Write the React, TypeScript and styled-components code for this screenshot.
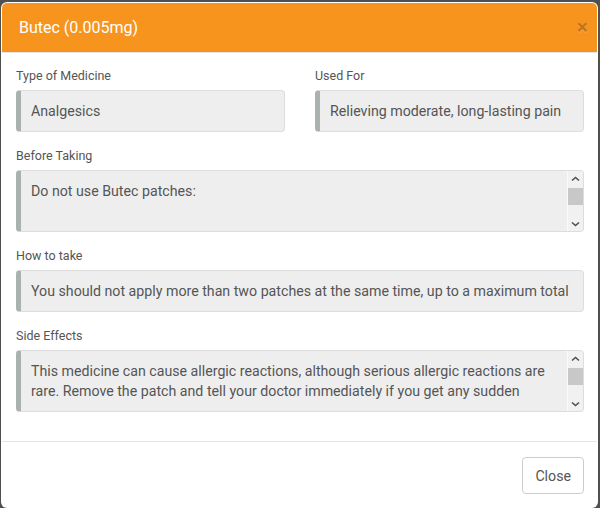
import React from 'react';
import styled, { createGlobalStyle } from 'styled-components';

const GlobalStyle = createGlobalStyle`
  html, body {
    margin: 0;
    padding: 0;
    background: #505050;
    font-family: Roboto, "Liberation Sans", Arial, sans-serif;
  }
  * { box-sizing: border-box; }
`;

const beforeTaking = `Do not use Butec patches:

- if you are allergic to buprenorphine or to any of the other ingredients of this medicine
- if you have serious breathing problems`;

const sideEffects = `This medicine can cause allergic reactions, although serious allergic reactions are rare. Remove the patch and tell your doctor immediately if you get any sudden wheeziness, difficulties in breathing, swelling of the eyelids, face or lips, rash or itching.`;

const Chevron: React.FC<{ down?: boolean }> = ({ down }) => (
  <svg width="9" height="6" viewBox="0 0 9 6">
    <path
      d={down ? 'M1 1.5 L4.5 4.5 L8 1.5' : 'M1 4.5 L4.5 1.5 L8 4.5'}
      fill="none"
      stroke="#505050"
      strokeWidth="1.6"
    />
  </svg>
);

const ScrollBar: React.FC = () => (
  <Scroll>
    <ArrowBox><Chevron /></ArrowBox>
    <Track><Thumb /></Track>
    <ArrowBox><Chevron down /></ArrowBox>
  </Scroll>
);

const App: React.FC = () => {
  return (
    <>
      <GlobalStyle />
      <Backdrop>
        <Modal>
          <Header>
            <Title>Butec (0.005mg)</Title>
            <CloseX type="button" aria-label="Close">×</CloseX>
          </Header>

          <Body>
            <Row>
              <FormGroup>
                <Label>Type of Medicine</Label>
                <Field>
                  <FieldText>Analgesics</FieldText>
                </Field>
              </FormGroup>
              <FormGroup>
                <Label>Used For</Label>
                <Field>
                  <FieldText>Relieving moderate, long-lasting pain</FieldText>
                </Field>
              </FormGroup>
            </Row>

            <FormGroup>
              <Label>Before Taking</Label>
              <Field $multi>
                <FieldText $multi>{beforeTaking}</FieldText>
                <ScrollBar />
              </Field>
            </FormGroup>

            <FormGroup>
              <Label>How to take</Label>
              <Field>
                <FieldText>
                  You should not apply more than two patches at the same time, up to a maximum total
                </FieldText>
              </Field>
            </FormGroup>

            <FormGroup>
              <Label>Side Effects</Label>
              <Field $multi>
                <FieldText $multi>{sideEffects}</FieldText>
                <ScrollBar />
              </Field>
            </FormGroup>
          </Body>

          <Footer>
            <Button type="button">Close</Button>
          </Footer>
        </Modal>
      </Backdrop>
    </>
  );
};

const Backdrop = styled.div`
  width: 600px;
  height: 508px;
  overflow: hidden;
  padding: 2px 0 0 1px;
`;

const Modal = styled.div`
  width: 597px;
  background: #fff;
  border: 1px solid rgba(255, 255, 255, 0.6);
  border-radius: 6px;
  overflow: hidden;
`;

const Header = styled.div`
  height: 50px;
  background: #f7941e;
  border-bottom: 1px solid #e5e5e5;
  display: flex;
  align-items: center;
  justify-content: space-between;
  padding: 0 9px 0 17px;
`;

const Title = styled.h4`
  margin: 0;
  color: #fff;
  font-size: 16px;
  font-weight: 400;
`;

const CloseX = styled.button`
  background: none;
  border: none;
  padding: 0;
  font-family: inherit;
  font-size: 21px;
  font-weight: 700;
  line-height: 1;
  color: #000;
  opacity: 0.2;
  text-shadow: 0 1px 0 #fff;
  cursor: pointer;
`;

const Body = styled.div`
  padding: 14px 13px 14px 14px;
  display: flow-root;
`;

const Row = styled.div`
  display: grid;
  grid-template-columns: 1fr 1fr;
  column-gap: 30px;
`;

const FormGroup = styled.div`
  display: flex;
  flex-direction: column;
  margin-bottom: 15px;
`;

const Label = styled.label`
  font-size: 12.5px;
  line-height: 18px;
  color: #555;
  margin-bottom: 5px;
`;

const Field = styled.div<{ $multi?: boolean }>`
  display: flex;
  align-items: ${({ $multi }) => ($multi ? 'stretch' : 'center')};
  height: ${({ $multi }) => ($multi ? '62px' : '42px')};
  background: #eee;
  border: 1px solid #ddd;
  border-left: 5px solid #aab2b1;
  border-radius: 4px;
  overflow: hidden;
`;

const FieldText = styled.div<{ $multi?: boolean }>`
  flex: 1;
  min-width: 0;
  margin: 0 10px;
  padding-top: ${({ $multi }) => ($multi ? '10px' : '0')};
  height: ${({ $multi }) => ($multi ? '50px' : 'auto')};
  overflow: hidden;
  white-space: ${({ $multi }) => ($multi ? 'pre-wrap' : 'nowrap')};
  color: #555;
  font-size: 14.2px;
  line-height: 20px;
`;

const Scroll = styled.div`
  width: 16px;
  flex: none;
  display: flex;
  flex-direction: column;
  background: #f1f1f1;
  border-left: 1px solid #fafafa;
`;

const ArrowBox = styled.div`
  height: 15px;
  display: flex;
  align-items: center;
  justify-content: center;
`;

const Track = styled.div`
  flex: 1;
  padding-top: 2px;
`;

const Thumb = styled.div`
  height: 17px;
  background: #c8c8c8;
`;

const Footer = styled.div`
  border-top: 1px solid #e5e5e5;
  padding: 15px 13px 13px 14px;
  display: flex;
  justify-content: flex-end;
`;

const Button = styled.button`
  height: 37px;
  padding: 0 12px;
  background: #fff;
  border: 1px solid #ccc;
  border-radius: 4px;
  color: #555;
  font-family: inherit;
  font-size: 14.2px;
  cursor: pointer;
`;

export default App;
